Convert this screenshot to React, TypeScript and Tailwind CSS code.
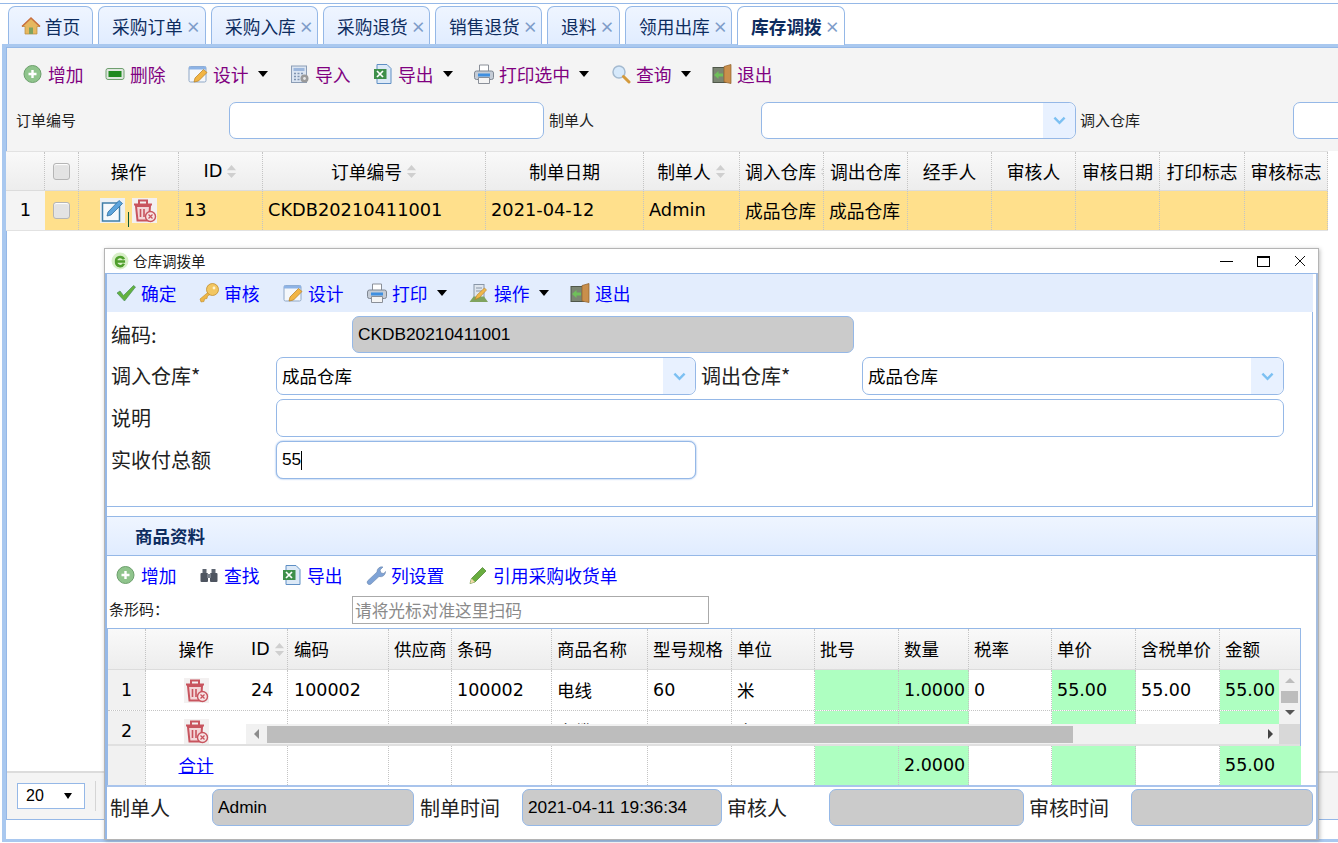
import type { ReactNode } from 'react';

const fontCn = 'font-["Noto_Sans_CJK_SC","Noto_Sans",sans-serif]';

type IconName =
  | 'plus' | 'minus' | 'design' | 'import' | 'excel' | 'print' | 'search' | 'door'
  | 'check' | 'key' | 'ops' | 'binoculars' | 'wrench' | 'pencil';

function Icon({ name }: { name: IconName }) {
  const cls = 'w-5 h-5 shrink-0';
  switch (name) {
    case 'plus':
      return (
        <svg viewBox="0 0 20 20" className={cls}>
          <circle cx="9.500" cy="10" r="8.500" fill="#8fc48c" stroke="#6c9f6c" />
          <path d="M9.500 6v8M5.500 10h8" stroke="#fff" strokeWidth="2.400" />
        </svg>
      );
    case 'minus':
      return (
        <svg viewBox="0 0 20 20" className={cls}>
          <rect x="1" y="4.500" width="18" height="11" rx="2" fill="#dfe7df" stroke="#6f9f6f" />
          <rect x="3.500" y="7" width="13" height="6" fill="#1f8a1f" />
        </svg>
      );
    case 'design':
      return (
        <svg viewBox="0 0 20 20" className={cls}>
          <rect x="1" y="2.500" width="17" height="15.500" rx="1.500" fill="#f4f7fb" stroke="#8fa7c6" />
          <rect x="1" y="2.500" width="17" height="3" fill="#8db3e6" />
          <path d="M6 18l1-4 8.500-8.500 3.500 3L10.500 17z" fill="#f2b544" stroke="#b57e22" strokeWidth=".7" />
        </svg>
      );
    case 'import':
      return (
        <svg viewBox="0 0 20 20" className={cls}>
          <rect x="1.500" y="2" width="15" height="16.500" fill="#dbe5f2" stroke="#8c9db5" />
          <rect x="3.500" y="4" width="11" height="3" fill="#9db7dc" />
          <path d="M4 9.500h2M7.500 9.500h2M11 9.500h2M4 12.500h2M7.500 12.500h2M4 15.500h2M7.500 15.500h2" stroke="#7f93b0" strokeWidth="1.500" />
          <circle cx="14.500" cy="14.500" r="4" fill="#9a9a9a" />
          <circle cx="14.500" cy="14.500" r="1.400" fill="#e6e6e6" />
        </svg>
      );
    case 'excel':
      return (
        <svg viewBox="0 0 20 20" className={cls}>
          <path d="M4 .5h10l4 4v15H4z" fill="#dce9f7" stroke="#5f8fc4" />
          <path d="M1 5h12.500v10H1z" fill="#3e8f4a" />
          <path d="M4 7l6 6M10 7l-6 6" stroke="#fff" strokeWidth="1.700" />
        </svg>
      );
    case 'print':
      return (
        <svg viewBox="0 0 20 20" className={cls}>
          <path d="M5.500 1h9v7h-9z" fill="#fff" stroke="#8a8f98" />
          <rect x=".5" y="7" width="19" height="8.500" rx="2" fill="#c5ccd6" stroke="#7f8792" />
          <rect x="4" y="9.500" width="12" height="3" fill="#3f8fe0" />
          <path d="M4.500 13.500h11v6h-11z" fill="#f4f4f4" stroke="#8a8f98" />
        </svg>
      );
    case 'search':
      return (
        <svg viewBox="0 0 20 20" className={cls}>
          <circle cx="8" cy="8" r="6" fill="#d6e9fb" stroke="#a4bad0" strokeWidth="1.500" />
          <path d="M12.500 12.500l5.500 5.500" stroke="#d49a3c" strokeWidth="3" strokeLinecap="round" />
        </svg>
      );
    case 'door':
      return (
        <svg viewBox="0 0 20 20" className={cls}>
          <rect x="1" y="3.500" width="13" height="15" fill="#7b8572" stroke="#4f574a" />
          <path d="M12 2.500l7-2v19l-7-1.500z" fill="#c98f4c" stroke="#8c5f2a" strokeWidth=".7" />
          <path d="M2 11l4.500-4v2.500h4.500v3H6.500V15z" fill="#6fc05a" />
        </svg>
      );
    case 'check':
      return (
        <svg viewBox="0 0 20 20" className={cls}>
          <path d="M1 10l3-2 3.500 4.500L17.500 2.500l2 1.500L8.500 18z" fill="#63b23f" stroke="#4a8f5f" strokeWidth=".7" />
        </svg>
      );
    case 'key':
      return (
        <svg viewBox="0 0 20 20" className={cls}>
          <path d="M10 8.500L1 16l1 3 3-.5.500-2.500 2.500-.5.500-2.500L12 11z" fill="#edb648" stroke="#c08d2c" strokeWidth=".6" />
          <circle cx="13.500" cy="6.500" r="6" fill="#f2c661" stroke="#c08d2c" strokeWidth=".8" />
          <circle cx="15" cy="5" r="1.400" fill="#fff3cf" />
        </svg>
      );
    case 'ops':
      return (
        <svg viewBox="0 0 20 20" className={cls}>
          <rect x="5" y="1.500" width="10" height="13.500" fill="#dfe6ee" stroke="#8a97a8" />
          <path d="M7 5h6M7 8h6" stroke="#8a97a8" />
          <path d="M.5 19l4-5.500h10.500l4 5.500z" fill="#7fa35f" />
          <path d="M6 16.500l2-4.500 7.500-7 2 2-7 7.500z" fill="#f0b84c" stroke="#b57e22" strokeWidth=".6" />
        </svg>
      );
    case 'binoculars':
      return (
        <svg viewBox="0 0 20 20" className={cls}>
          <rect x="3.500" y="4" width="4" height="4" fill="#5d6570" />
          <rect x="12.500" y="4" width="4" height="4" fill="#5d6570" />
          <rect x="1.500" y="8" width="7.500" height="9" rx="1" fill="#4e5560" />
          <rect x="11" y="8" width="7.500" height="9" rx="1" fill="#4e5560" />
          <rect x="8" y="9" width="4" height="4" fill="#7b828c" />
        </svg>
      );
    case 'wrench':
      return (
        <svg viewBox="0 0 20 20" className={cls}>
          <path d="M2 15.500L11 7a4.800 4.800 0 0 1 6-5l-3 3 1 3 3 .5 1.500-2A5 5 0 0 1 13 11.500L5 19a2 2 0 0 1-3-3.500z" fill="#7fa3d6" stroke="#6b87ad" strokeWidth=".6" />
        </svg>
      );
    case 'pencil':
      return (
        <svg viewBox="0 0 20 20" className={cls}>
          <path d="M2 18.500l1.500-5L14.500 2.500l3.500 3.500L7 17z" fill="#69ad3f" stroke="#47802a" strokeWidth=".7" />
          <path d="M2 18.500l1.500-5 3.500 3.500z" fill="#f0d9a8" />
        </svg>
      );
  }
}

function Caret() {
  return <span className="ml-[9px] w-0 h-0 border-x-[5.500px] border-x-transparent border-t-[6px] border-t-black" />;
}

function ToolItem({ icon, label, caret, color, width }: { icon: IconName; label: string; caret?: boolean; color: string; width: string }) {
  return (
    <div className={`flex items-center shrink-0 text-[17.800px] ${color} ${width}`}>
      <Icon name={icon} />
      <span className="ml-[5px] whitespace-nowrap">{label}</span>
      {caret && <Caret />}
    </div>
  );
}

function SortMark() {
  return (
    <svg viewBox="0 0 12 16" className="w-[11px] h-[15px] shrink-0 ml-[4px]">
      <path d="M6 1l5 5.500H1zM6 15l5-5.500H1z" fill="#cfcfcf" />
    </svg>
  );
}

function TrashIcon() {
  return (
    <svg viewBox="0 0 25 25" className="w-[25px] h-[25px]">
      <rect width="25" height="25" fill="#f3f0f0" />
      <path d="M2 6.500h18M7 6V2.500h8V6" fill="none" stroke="#c8545e" strokeWidth="2" />
      <path d="M4 8h14l-1 14.500H5.500z" fill="#f3d6d8" stroke="#c8545e" strokeWidth="2" />
      <path d="M8.500 11v8M12 11v8" stroke="#c8545e" strokeWidth="1.600" />
      <circle cx="18.500" cy="18.500" r="5" fill="#f6e4e5" stroke="#c8545e" strokeWidth="1.400" />
      <path d="M16.500 16.500l4 4M20.500 16.500l-4 4" stroke="#c8545e" strokeWidth="1.300" />
    </svg>
  );
}

function EditIcon() {
  return (
    <svg viewBox="0 0 25 25" className="w-[25px] h-[25px]">
      <rect width="25" height="25" fill="#edf1f4" />
      <rect x="2.500" y="5" width="17" height="18" fill="#f5f9fc" stroke="#3f7ea8" strokeWidth="1.500" />
      <path d="M7 18l1-4L19 2.500l3.500 3L11 17z" fill="#5da4dc" stroke="#2f6f9f" strokeWidth=".8" />
    </svg>
  );
}

function Chevron() {
  return (
    <div className="w-[32px] self-stretch flex items-center justify-center bg-[#e8f1ff] rounded-r-[7px]">
      <svg viewBox="0 0 14 9" className="w-[13px] h-[9px]">
        <path d="M1.500 1.500L7 7l5.500-5.500" fill="none" stroke="#7cc0f2" strokeWidth="2.600" />
      </svg>
    </div>
  );
}

function Field({ width, gray, children, arrow, strong }: { width: string; gray?: boolean; children?: ReactNode; arrow?: boolean; strong?: boolean }) {
  return (
    <div className={`h-full shrink-0 border border-[#95b8e7] rounded-[7px] flex items-center overflow-hidden ${width} ${gray ? 'bg-[#cbcbcb]' : 'bg-white'} ${strong ? 'shadow-[0_0_2px_#6f9fe0]' : ''}`}>
      <div className="flex-1 pl-[5px] flex items-center text-black">{children}</div>
      {arrow && <Chevron />}
    </div>
  );
}

const mainCols = 'grid-cols-[39px_34px_100px_84px_223px_158px_96px_84px_84px_84px_84px_84px_85px_83px]';
const subCols = 'grid-cols-[38px_100px_42px_101px_63px_100px_96px_84px_83px_84px_70px_83px_84px_84px_81px]';
const dotted = 'border-r border-dotted border-[#c4c4c4]';
const headBg = 'bg-gradient-to-b from-[#f9f9f9] to-[#ededed]';

function Head({ children, left, sort, plain }: { children?: ReactNode; left?: boolean; sort?: boolean; plain?: boolean }) {
  return (
    <div className={`flex items-center ${left ? 'pl-[5px]' : 'justify-center'} ${plain ? '' : dotted} whitespace-nowrap overflow-hidden`}>
      {children}
      {sort && <SortMark />}
    </div>
  );
}

function Td({ children, bg, center, plain }: { children?: ReactNode; bg?: string; center?: boolean; plain?: boolean }) {
  return (
    <div className={`flex items-center whitespace-nowrap overflow-hidden ${center ? 'justify-center' : 'pl-[5px]'} ${plain ? '' : dotted} ${bg ?? ''}`}>
      {children}
    </div>
  );
}

const num = 'font-["DejaVu_Sans","Noto_Sans_CJK_SC",sans-serif]';
const arial = "font-['Liberation_Sans',sans-serif]";
const green = 'bg-[#aeffc1]';
const yellow = 'bg-[#ffe08c]';

function Checkbox() {
  return <span className="w-[17px] h-[17px] rounded-[3px] bg-[#e3e3e3] border border-[#b5b5b5] shadow-[inset_0_1px_1px_#fff]" />;
}

function SubGrid() {
  return (
    <div className={`w-[1194px] h-[157px] border-t border-x border-[#95b8e7] relative text-[17.500px] text-black shrink-0 ${num}`}>
      <div className={`grid ${subCols} h-[41px] ${headBg} border-b border-[#dcdcdc] ${fontCn}`}>
        <Head />
        <Head plain>操作</Head>
        <Head left sort><span className={num}>ID</span></Head>
        <Head left><span className="ml-[1px]">编码</span></Head>
        <Head left>供应商</Head>
        <Head left>条码</Head>
        <Head left>商品名称</Head>
        <Head left>型号规格</Head>
        <Head left>单位</Head>
        <Head left>批号</Head>
        <Head left>数量</Head>
        <Head left>税率</Head>
        <Head left>单价</Head>
        <Head left>含税单价</Head>
        <Head left plain>金额</Head>
      </div>
      <div className="h-[74px] overflow-hidden relative">
        <div className={`grid ${subCols} h-[41px] border-b border-dotted border-[#c4c4c4]`}>
          <Td center bg="bg-[#f1f1f1]">1</Td>
          <Td center plain><TrashIcon /></Td>
          <Td>24</Td>
          <Td><span className="ml-[1px]">100002</span></Td>
          <Td />
          <Td>100002</Td>
          <Td><span className={fontCn}>电线</span></Td>
          <Td>60</Td>
          <Td><span className={fontCn}>米</span></Td>
          <Td bg={green} />
          <Td bg={green}>1.0000</Td>
          <Td>0</Td>
          <Td bg={green}>55.00</Td>
          <Td>55.00</Td>
          <Td plain bg={green}>55.00</Td>
        </div>
        <div className={`grid ${subCols} h-[41px]`}>
          <Td center bg="bg-[#f1f1f1]">2</Td>
          <Td center plain><TrashIcon /></Td>
          <Td />
          <Td />
          <Td />
          <Td />
          <Td><span className={fontCn}>电缆</span></Td>
          <Td />
          <Td><span className={fontCn}>米</span></Td>
          <Td bg={green} />
          <Td bg={green} />
          <Td />
          <Td bg={green} />
          <Td />
          <Td plain bg={green} />
        </div>

        {/* scrollbars lie over the rows */}
        <div className="absolute right-0 top-0 w-[21px] h-[54px] bg-[#f1f1f1] flex flex-col items-center">
          <span className="mt-[8px] w-0 h-0 border-x-[5px] border-x-transparent border-b-[5px] border-b-[#bdbdbd]" />
          <span className="mt-[8px] w-[17px] h-[12px] bg-[#bdbdbd]" />
          <span className="mt-[7px] w-0 h-0 border-x-[5px] border-x-transparent border-t-[5px] border-t-[#555]" />
        </div>
        <div className="absolute left-[138px] right-0 bottom-0 h-[20px] bg-[#f1f1f1] flex items-center">
          <div className="w-[21px] flex justify-center">
            <span className="w-0 h-0 border-y-[5px] border-y-transparent border-r-[5px] border-r-[#8c8c8c]" />
          </div>
          <div className="w-[806px] h-[17px] bg-[#bdbdbd]" />
          <div className="flex-1 flex justify-end pr-[27px]">
            <span className="w-0 h-0 border-y-[5px] border-y-transparent border-l-[5px] border-l-[#444]" />
          </div>
          <div className="absolute right-0 top-0 w-[21px] h-[20px] bg-[#d8d8d8]" />
        </div>
      </div>
      <div className={`grid ${subCols} h-[41px] border-t-2 border-[#e0e0e0]`}>
        <Td bg="bg-[#f1f1f1]" />
        <Td center plain><a href="#" className={`text-[#0000ff] underline ${fontCn}`}>合计</a></Td>
        <Td />
        <Td />
        <Td />
        <Td />
        <Td />
        <Td />
        <Td />
        <Td bg={green} />
        <Td bg={green}>2.0000</Td>
        <Td />
        <Td bg={green} />
        <Td />
        <Td plain bg={green}>55.00</Td>
      </div>
    </div>
  );
}

function OrderDialog() {
  const blue = 'text-[#0000ff]';
  const label = 'shrink-0 text-[20px] text-[#222]';
  return (
    <div className="absolute left-[104px] top-[248px] w-[1215px] h-[592px] bg-white border border-[#b4b4b4] shadow-[1px_1px_4px_rgba(0,0,0,0.25)] flex flex-col">
      <div className="h-[24px] flex items-center pl-[6px] shrink-0">
        <svg viewBox="0 0 16 16" className="w-[18px] h-[18px]">
          <circle cx="8" cy="8" r="7.500" fill="#d8efc8" />
          <path d="M12.500 8.500H4.500a3.700 3.700 0 0 1 7-2M4.500 9a3.700 3.700 0 0 0 7 1.500" fill="none" stroke="#4f9f2c" strokeWidth="2.200" />
        </svg>
        <span className="ml-[4px] text-[14.500px] text-[#222]">仓库调拨单</span>
        <div className="ml-auto flex items-center gap-[24px] pr-[12px]">
          <span className="w-[13px] h-px bg-black" />
          <span className="w-[13px] h-[11px] border border-black border-t-2" />
          <svg viewBox="0 0 12 12" className="w-[12px] h-[12px]">
            <path d="M1 1l10 10M11 1L1 11" stroke="#111" strokeWidth="1" />
          </svg>
        </div>
      </div>

      <div className="flex-1 flex flex-col border-t border-x-2 border-x-[#95b8e7] border-r-[#a5bddf] border-t-[#95b8e7] min-h-0">
        <div className="h-[38px] mr-[3px] bg-[#e3edfd] flex items-center pl-[9px] shrink-0">
          <ToolItem width="w-[83px]" color={blue} icon="check" label="确定" />
          <ToolItem width="w-[84px]" color={blue} icon="key" label="审核" />
          <ToolItem width="w-[84px]" color={blue} icon="design" label="设计" />
          <ToolItem width="w-[102px]" color={blue} icon="print" label="打印" caret />
          <ToolItem width="w-[101px]" color={blue} icon="ops" label="操作" caret />
          <ToolItem width="w-[70px]" color={blue} icon="door" label="退出" />
        </div>

        <div className={`h-[195px] mr-[3px] border-r border-b border-[#95b8e7] pt-[4px] flex flex-col gap-[4px] shrink-0 ${fontCn}`}>
          <div className="h-[37px] flex items-center pl-[4px]">
            <span className={`${label} w-[241px]`}>编码:</span>
            <Field width="w-[502px]" gray>
              <span className={`text-[17.300px] ${arial}`}>CKDB20210411001</span>
            </Field>
          </div>
          <div className="h-[38px] flex items-center pl-[4px]">
            <span className={`${label} w-[165px]`}>调入仓库*</span>
            <Field width="w-[420px]" arrow><span className="text-[17.500px]">成品仓库</span></Field>
            <span className={`${label} ml-[5px] w-[161px]`}>调出仓库*</span>
            <Field width="w-[422px]" arrow><span className="text-[17.500px]">成品仓库</span></Field>
          </div>
          <div className="h-[38px] flex items-center pl-[4px]">
            <span className={`${label} w-[165px]`}>说明</span>
            <Field width="w-[1008px]" />
          </div>
          <div className="h-[38px] flex items-center pl-[4px]">
            <span className={`${label} w-[165px]`}>实收付总额</span>
            <Field width="w-[420px]" strong>
              <span className={`text-[17.300px] ${arial}`}>55</span>
              <span className="w-px h-[19px] bg-black" />
            </Field>
          </div>
        </div>

        <div className={`mt-[9px] h-[40px] shrink-0 flex items-center pl-[28px] border-y border-[#95b8e7] bg-gradient-to-b from-[#eff5ff] to-[#e0ecff] text-[17.500px] font-bold text-[#0e2d5f] ${fontCn}`}>
          商品资料
        </div>
        <div className="h-[38px] shrink-0 flex items-center pl-[9px]">
          <ToolItem width="w-[83px]" color={blue} icon="plus" label="增加" />
          <ToolItem width="w-[83px]" color={blue} icon="binoculars" label="查找" />
          <ToolItem width="w-[84px]" color={blue} icon="excel" label="导出" />
          <ToolItem width="w-[102px]" color={blue} icon="wrench" label="列设置" />
          <ToolItem width="w-[150px]" color={blue} icon="pencil" label="引用采购收货单" />
        </div>
        <div className="h-[34px] shrink-0 flex items-center pl-[2px] pb-[3px]">
          <span className="w-[243px] shrink-0 text-[15px] text-[#222]">条形码：</span>
          <input
            readOnly
            placeholder="请将光标对准这里扫码"
            className="w-[357px] h-[28px] border border-[#aaa] pl-[2px] text-[16.700px] placeholder:text-[#8a8a8a] outline-none"
          />
        </div>

        <SubGrid />

        <div className="flex-1 border-t-2 border-[#a9c4ec] pt-[2px] pl-[3px] text-[20px] text-[#222]">
          <div className="h-[37px] flex items-center">
            <span className="w-[102px] shrink-0">制单人</span>
            <Field width="w-[202px]" gray><span className={`text-[17.300px] ${arial}`}>Admin</span></Field>
            <span className="ml-[6px] w-[102px] shrink-0">制单时间</span>
            <Field width="w-[200px]" gray><span className={`text-[17.300px] ${arial}`}>2021-04-11 19:36:34</span></Field>
            <span className="ml-[5px] w-[102px] shrink-0">审核人</span>
            <Field width="w-[195px]" gray />
            <span className="ml-[5px] w-[102px] shrink-0">审核时间</span>
            <Field width="w-[182px]" gray />
          </div>
        </div>
      </div>
    </div>
  );
}

const tabs = [
  { label: '采购订单', w: 'w-[108px]' },
  { label: '采购入库', w: 'w-[107px]' },
  { label: '采购退货', w: 'w-[107px]' },
  { label: '销售退货', w: 'w-[107px]' },
  { label: '退料', w: 'w-[73px]' },
  { label: '领用出库', w: 'w-[107px]' },
];

const tabBase = 'h-[39px] mt-[2px] flex items-center rounded-t-[7px] border border-b-0 border-[#95b8e7] text-[17.700px] text-[#0e2d5f]';

function TabClose() {
  return <span className="ml-[3px] text-[15px] font-bold text-[#7f9cc9] leading-none">×</span>;
}

export default function App() {
  const purple = 'text-[#800080]';
  return (
    <div className={`relative w-[1338px] h-[843px] overflow-hidden bg-white flex flex-col ${fontCn}`}>
      <div className="mt-[3px] border-t border-[#95b8e7] pl-[8px] flex gap-[5px] shrink-0">
        <div className={`${tabBase} w-[85px] justify-center bg-gradient-to-b from-[#eff5ff] to-[#e0ecff]`}>
          <svg viewBox="0 0 20 20" className="w-[20px] h-[20px]">
            <path d="M10 2L1 10.500h3V18h12v-7.500h3z" fill="#e6b860" stroke="#b98a3c" strokeWidth=".7" />
            <path d="M1 10.500L10 2l9 8.500" fill="none" stroke="#c9703f" strokeWidth="1.600" />
            <rect x="8" y="11.500" width="4" height="6.500" fill="#7fa35f" />
          </svg>
          <span className="ml-[4px]">首页</span>
        </div>
        {tabs.map((t) => (
          <div key={t.label} className={`${tabBase} ${t.w} pl-[13px] bg-gradient-to-b from-[#eff5ff] to-[#e0ecff]`}>
            {t.label}
            <TabClose />
          </div>
        ))}
        <div className={`${tabBase} w-[108px] pl-[13px] bg-white font-bold relative z-10`}>
          库存调拨
          <TabClose />
        </div>
      </div>
      <div className="h-[3px] -mt-px bg-[#a9c8ef] ml-[2px] shrink-0" />

      <div className="flex-1 ml-[2px] border-l-4 border-[#a9c8ef] flex flex-col min-h-0">
        <div className="flex-1 border-l border-[#95b8e7] border-b flex flex-col min-h-0 mb-[19px]">
          <div className="border-t border-[#95b8e7] bg-[#f4f4f4] h-[104px] shrink-0">
            <div className="h-[52px] flex items-center pl-[16px]">
              <ToolItem width="w-[82px]" color={purple} icon="plus" label="增加" />
              <ToolItem width="w-[83px]" color={purple} icon="minus" label="删除" />
              <ToolItem width="w-[102px]" color={purple} icon="design" label="设计" caret />
              <ToolItem width="w-[83px]" color={purple} icon="import" label="导入" />
              <ToolItem width="w-[101px]" color={purple} icon="excel" label="导出" caret />
              <ToolItem width="w-[137px]" color={purple} icon="print" label="打印选中" caret />
              <ToolItem width="w-[101px]" color={purple} icon="search" label="查询" caret />
              <ToolItem width="w-[70px]" color={purple} icon="door" label="退出" />
            </div>
            <div className="h-[37px] mt-[2px] flex items-center pl-[9px] text-[15px] text-[#222]">
              <span className="w-[213px] shrink-0">订单编号</span>
              <Field width="w-[315px]" />
              <span className="ml-[5px] w-[212px] shrink-0">制单人</span>
              <Field width="w-[315px]" arrow />
              <span className="ml-[4px] w-[213px] shrink-0">调入仓库</span>
              <Field width="w-[60px]" />
            </div>
          </div>

          <div className="-ml-px text-[17.800px] text-black">
            <div className={`grid ${mainCols} w-[1322px] h-[40px] ${headBg} border-b border-[#dcdcdc] border-t border-t-[#e2e2e2]`}>
              <Head />
              <Head><Checkbox /></Head>
              <Head>操作</Head>
              <Head sort><span className={num}>ID</span></Head>
              <Head sort>订单编号</Head>
              <Head>制单日期</Head>
              <Head sort>制单人</Head>
              <Head left sort>调入仓库</Head>
              <Head>调出仓库</Head>
              <Head>经手人</Head>
              <Head>审核人</Head>
              <Head>审核日期</Head>
              <Head>打印标志</Head>
              <Head>审核标志</Head>
            </div>
            <div className={`grid ${mainCols} w-[1322px] h-[40px] border-b border-[#e2e2e2] ${num}`}>
              <Td center bg="bg-[#f4f4f4]" plain>1</Td>
              <Td center bg={yellow}><Checkbox /></Td>
              <Td center bg={yellow}>
                <EditIcon />
                <span className="w-px h-[15px] bg-[#0a5a3c] mx-[3px] self-end mb-[3px]" />
                <TrashIcon />
              </Td>
              <Td bg={yellow}>13</Td>
              <Td bg={yellow}>CKDB20210411001</Td>
              <Td bg={yellow}>2021-04-12</Td>
              <Td bg={yellow}>Admin</Td>
              <Td bg={yellow}><span className={fontCn}>成品仓库</span></Td>
              <Td bg={yellow}><span className={fontCn}>成品仓库</span></Td>
              <Td bg={yellow} />
              <Td bg={yellow} />
              <Td bg={yellow} />
              <Td bg={yellow} />
              <Td bg={yellow} />
            </div>
          </div>

          <div className="mt-auto h-[48px] border-t-2 border-[#dcdcdc] bg-[#f4f4f4] flex items-center pl-[10px] shrink-0">
            <div className="w-[68px] h-[26px] border border-[#95b8e7] bg-white flex items-center pl-[8px] pr-[12px] justify-between text-[16px] text-black">
              <span className={arial}>20</span>
              <span className="w-0 h-0 border-x-[4px] border-x-transparent border-t-[6px] border-t-black" />
            </div>
            <span className="ml-[10px] w-px h-[30px] bg-[#d5d5d5]" />
          </div>
        </div>
      </div>
      <div className="h-[3px] mb-[1px] bg-[#a9c8ef] ml-[2px] shrink-0" />

      <OrderDialog />
    </div>
  );
}
